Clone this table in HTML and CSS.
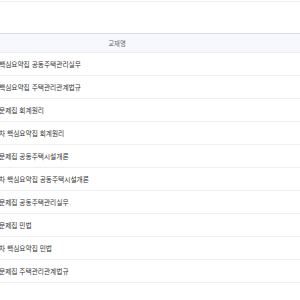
FILE: index.html
```html
<!DOCTYPE html>
<html lang="ko">
  <head>
    <meta charset="UTF-8"/>
    <title>교재 목록</title>
    <link rel="stylesheet" href="styles.css">
  </head>
  <body>
    <div class="topline"></div>
    <table class="books">
      <thead>
        <tr><th class="name">교재명</th><th class="rest"></th></tr>
      </thead>
      <tbody>
        <tr><td>핵심요약집 공동주택관리실무</td><td></td></tr>
        <tr><td>핵심요약집 주택관리관계법규</td><td></td></tr>
        <tr><td>문제집 회계원리</td><td></td></tr>
        <tr><td>차 핵심요약집 회계원리</td><td></td></tr>
        <tr><td>문제집 공동주택시설개론</td><td></td></tr>
        <tr><td>차 핵심요약집 공동주택시설개론</td><td></td></tr>
        <tr><td>문제집 공동주택관리실무</td><td></td></tr>
        <tr><td>문제집 민법</td><td></td></tr>
        <tr><td>차 핵심요약집 민법</td><td></td></tr>
        <tr><td>문제집 주택관리관계법규</td><td></td></tr>
      </tbody>
    </table>
  </body>
</html>
```

FILE: styles.css
```css
body { margin: 0; background: white; overflow: hidden;
  font-family: "Noto Sans CJK KR", "Noto Sans", sans-serif; }
.topline { height: 1px; margin-top: 1px; background: #f0f0f2; }
.books { border-collapse: collapse; margin: 31px 0 0 -6px; width: 306px; table-layout: fixed; }
.books th { height: 18px; padding: 0; background: #f7f8fd;
  border-top: 1px solid #dcdde2; border-bottom: 1px solid #ececf0;
  font-size: 6.4px; font-weight: normal; color: #666; text-align: center; }
.books th.name { width: 246px; }
.books td { height: 22px; padding: 0 0 0 5px; border-bottom: 1px solid #efeff2;
  font-size: 6.7px; color: #333; white-space: nowrap; }
```
